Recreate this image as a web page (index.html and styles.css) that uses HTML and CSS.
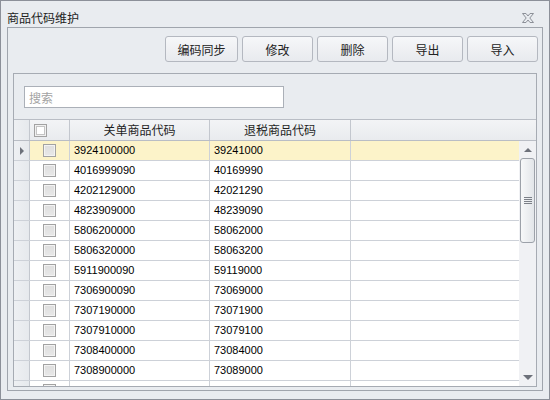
FILE: index.html
```html
<!DOCTYPE html>
<html lang="zh-CN">
<head>
    <meta charset="UTF-8">
    <meta name="viewport" content="width=device-width, initial-scale=1.0">
    <title>商品代码维护</title>
    <link rel="stylesheet" href="styles.css">
</head>
<body>

    <div class="window">
        <div class="titlebar">
            <span class="title">商品代码维护</span>
            <svg class="close" width="12" height="10" viewBox="0 0 12 10">
                <path d="M0.5 0.5 H4 L6 3 L8 0.5 H11.5 L7.8 5 L11.5 9.5 H8 L6 7 L4 9.5 H0.5 L4.2 5 Z" fill="none" stroke="#8c9098" stroke-width="1"/>
            </svg>
        </div>

        <div class="panel">
            <div class="toolbar">
                <button class="btn wide">编码同步</button>
                <button class="btn">修改</button>
                <button class="btn">删除</button>
                <button class="btn">导出</button>
                <button class="btn">导入</button>
            </div>

            <div class="gridbox">
                <div class="search">
                    <input type="text" placeholder="搜索">
                </div>

                <div class="grid">
                    <div class="head">
                        <div class="rh"></div>
                        <div class="cell chk"><span class="box head-box"></span></div>
                        <div class="cell c1 center">关单商品代码</div>
                        <div class="cell c2 center">退税商品代码</div>
                        <div class="cell c3 last"></div>
                    </div>

                    <div class="body">
                        <div class="rows">
                            <div class="row current">
                                <div class="rh"><span class="arrow"></span></div>
                                <div class="cell chk"><span class="box"></span></div>
                                <div class="cell c1">3924100000</div>
                                <div class="cell c2">39241000</div>
                                <div class="cell c3"></div>
                            </div>
                            <div class="row">
                                <div class="rh"></div>
                                <div class="cell chk"><span class="box"></span></div>
                                <div class="cell c1">4016999090</div>
                                <div class="cell c2">40169990</div>
                                <div class="cell c3"></div>
                            </div>
                            <div class="row">
                                <div class="rh"></div>
                                <div class="cell chk"><span class="box"></span></div>
                                <div class="cell c1">4202129000</div>
                                <div class="cell c2">42021290</div>
                                <div class="cell c3"></div>
                            </div>
                            <div class="row">
                                <div class="rh"></div>
                                <div class="cell chk"><span class="box"></span></div>
                                <div class="cell c1">4823909000</div>
                                <div class="cell c2">48239090</div>
                                <div class="cell c3"></div>
                            </div>
                            <div class="row">
                                <div class="rh"></div>
                                <div class="cell chk"><span class="box"></span></div>
                                <div class="cell c1">5806200000</div>
                                <div class="cell c2">58062000</div>
                                <div class="cell c3"></div>
                            </div>
                            <div class="row">
                                <div class="rh"></div>
                                <div class="cell chk"><span class="box"></span></div>
                                <div class="cell c1">5806320000</div>
                                <div class="cell c2">58063200</div>
                                <div class="cell c3"></div>
                            </div>
                            <div class="row">
                                <div class="rh"></div>
                                <div class="cell chk"><span class="box"></span></div>
                                <div class="cell c1">5911900090</div>
                                <div class="cell c2">59119000</div>
                                <div class="cell c3"></div>
                            </div>
                            <div class="row">
                                <div class="rh"></div>
                                <div class="cell chk"><span class="box"></span></div>
                                <div class="cell c1">7306900090</div>
                                <div class="cell c2">73069000</div>
                                <div class="cell c3"></div>
                            </div>
                            <div class="row">
                                <div class="rh"></div>
                                <div class="cell chk"><span class="box"></span></div>
                                <div class="cell c1">7307190000</div>
                                <div class="cell c2">73071900</div>
                                <div class="cell c3"></div>
                            </div>
                            <div class="row">
                                <div class="rh"></div>
                                <div class="cell chk"><span class="box"></span></div>
                                <div class="cell c1">7307910000</div>
                                <div class="cell c2">73079100</div>
                                <div class="cell c3"></div>
                            </div>
                            <div class="row">
                                <div class="rh"></div>
                                <div class="cell chk"><span class="box"></span></div>
                                <div class="cell c1">7308400000</div>
                                <div class="cell c2">73084000</div>
                                <div class="cell c3"></div>
                            </div>
                            <div class="row">
                                <div class="rh"></div>
                                <div class="cell chk"><span class="box"></span></div>
                                <div class="cell c1">7308900000</div>
                                <div class="cell c2">73089000</div>
                                <div class="cell c3"></div>
                            </div>
                            <div class="row">
                                <div class="rh"></div>
                                <div class="cell chk"><span class="box"></span></div>
                                <div class="cell c1"></div>
                                <div class="cell c2"></div>
                                <div class="cell c3"></div>
                            </div>
                        </div>

                        <div class="vscroll">
                            <div class="sb-btn"><span class="up"></span></div>
                            <div class="thumb">
                                <span class="grip"></span>
                            </div>
                            <div class="sb-track"></div>
                            <div class="sb-btn"><span class="down"></span></div>
                        </div>
                    </div>
                </div>
            </div>
        </div>
    </div>

</body>
</html>
```

FILE: styles.css
```css
*{
    margin: 0;
    padding: 0;
    box-sizing: border-box;
}
body{
    font-family: "Noto Sans CJK SC", "Liberation Sans", sans-serif;
    font-size: 12px;
    color: #1e1e1e;
    background: #e9ecf0;
}
.window{
    width: 550px;
    height: 400px;
    border: 1px solid #8c9099;
    background: #e9ecf0;
    padding: 0 6px 8px 6px;
    display: flex;
    flex-direction: column;
}
.titlebar{
    flex: none;
    height: 26px;
    display: flex;
    justify-content: space-between;
    align-items: flex-start;
}
.title{
    padding-top: 10px;
    line-height: 14px;
    font-size: 12px;
    color: #222;
}
.close{
    margin-top: 12px;
    margin-right: 9px;
}
.panel{
    flex: 1;
    min-height: 0;
    border: 1px solid #a0a5ad;
    padding: 8px 4px 3px 5px;
    display: flex;
    flex-direction: column;
}
.toolbar{
    flex: none;
    display: flex;
    justify-content: flex-end;
    gap: 4px;
}
.btn{
    width: 71px;
    height: 26px;
    border: 1px solid #b4b8c0;
    border-radius: 3px;
    background: linear-gradient(#f6f7f9, #e8eaee);
    font-family: "Noto Sans CJK SC", sans-serif;
    font-size: 12px;
    color: #222;
}
.btn.wide{
    width: 73px;
}
.gridbox{
    margin-top: 11px;
    margin-right: 1px;
    flex: 1;
    min-height: 0;
    border: 1px solid #a6abb3;
    display: flex;
    flex-direction: column;
    overflow: hidden;
}
.search{
    flex: none;
    padding: 12px 0 11px 10px;
}
.search input{
    display: block;
    width: 260px;
    height: 22px;
    border: 1px solid #abb0b8;
    background: #fff;
    padding-left: 4px;
    font-family: "Noto Sans CJK SC", sans-serif;
    font-size: 12px;
    outline: none;
}
.search input::placeholder{
    color: #a3a3a3;
}
.grid{
    flex: 1;
    display: flex;
    flex-direction: column;
    min-height: 0;
}
.head{
    flex: none;
    display: flex;
    height: 22px;
    border-top: 1px solid #b9bdc5;
    border-bottom: 1px solid #b9bdc5;
    background: linear-gradient(#f3f4f6, #e9ebee);
}
.head .cell{
    line-height: 20px;
    border-right: 1px solid #c3c7ce;
}
.head .last{
    border-right: none;
}
.rh{
    width: 16px;
    flex: none;
    border-right: 1px solid #c3c7ce;
    background: linear-gradient(90deg, #eef0f3, #e6e9ed);
    display: flex;
    align-items: center;
}
.cell{
    flex: none;
    border-right: 1px solid #cdd1d8;
    padding-left: 4px;
    white-space: nowrap;
    overflow: hidden;
}
.chk{
    width: 40px;
    padding: 0;
    display: flex;
    align-items: center;
    justify-content: center;
}
.head .chk{
    justify-content: flex-start;
    padding-left: 4px;
}
.c1{
    width: 140px;
}
.c2{
    width: 141px;
}
.c3{
    flex: 1;
    border-right: none;
}
.center{
    text-align: center;
    padding-left: 0;
}
.body{
    flex: 1;
    display: flex;
    min-height: 0;
}
.rows{
    flex: 1;
    overflow: hidden;
}
.row{
    display: flex;
    height: 20px;
    border-bottom: 1px solid #cdd1d8;
    background: #fff;
    font-family: "Liberation Sans", Arial, sans-serif;
    font-size: 11px;
    color: #000;
}
.row .cell{
    line-height: 19px;
}
.row.current .cell{
    background: #fcf3c9;
}
.arrow{
    margin-left: 6px;
    width: 0;
    height: 0;
    border-top: 4px solid transparent;
    border-bottom: 4px solid transparent;
    border-left: 4px solid #6d717a;
}
.box{
    display: block;
    width: 13px;
    height: 13px;
    border: 1px solid #a2a2a2;
    background: linear-gradient(#dedede, #e8e8e8);
    box-shadow: inset 0 0 0 1px #f3f3f3;
}
.head-box{
    background: #fff;
    box-shadow: inset 0 0 0 1px #f0f0f0, inset 0 0 0 2px #c4c4c4;
}
.vscroll{
    width: 17px;
    flex: none;
    background: #f0f1f4;
    display: flex;
    flex-direction: column;
    align-items: center;
}
.sb-btn{
    flex: none;
    height: 17px;
    width: 17px;
    display: flex;
    align-items: center;
    justify-content: center;
}
.up{
    width: 0;
    height: 0;
    border-left: 4px solid transparent;
    border-right: 4px solid transparent;
    border-bottom: 4px solid #6d717a;
}
.down{
    width: 0;
    height: 0;
    border-left: 5px solid transparent;
    border-right: 5px solid transparent;
    border-top: 5px solid #6d717a;
}
.thumb{
    flex: none;
    width: 15px;
    height: 85px;
    border: 1px solid #9ca1a9;
    border-radius: 3px;
    background: linear-gradient(90deg, #f7f8f9, #e2e5e9);
    display: flex;
    align-items: center;
    justify-content: center;
}
.grip{
    width: 8px;
    height: 7px;
    background: repeating-linear-gradient(#7b7f87 0 1px, transparent 1px 2px);
}
.sb-track{
    flex: 1;
}
```
